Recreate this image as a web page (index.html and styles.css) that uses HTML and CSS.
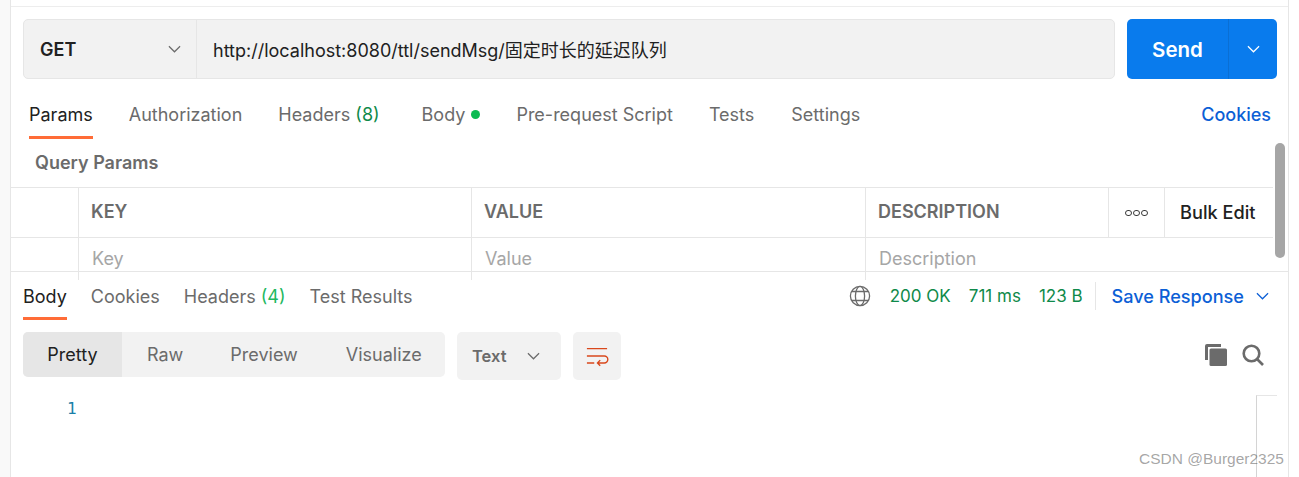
FILE: index.html
```html
<!DOCTYPE html>
<html lang="en">
<head>
  <meta charset="UTF-8">
  <meta name="viewport" content="width=device-width, initial-scale=1.0">
  <title>Postman request</title>
  <link rel="stylesheet" href="styles.css">
</head>
<body>
  <div class="app">
    <div class="rail"></div>
    <div class="main">
      <div class="topline"></div>

      <!-- Request bar -->
      <div class="request">
        <div class="urlbar">
          <div class="method">
            <span>GET</span>
            <svg class="chev" viewBox="0 0 14 8"><path d="M1 1l6 6 6-6"/></svg>
          </div>
          <div class="url">http://localhost:8080/ttl/sendMsg/固定时长的延迟队列</div>
        </div>
        <div class="send">
          <span class="send-label">Send</span>
          <span class="send-more">
            <svg class="chev chev-white" viewBox="0 0 14 8"><path d="M1 1l6 6 6-6"/></svg>
          </span>
        </div>
      </div>

      <!-- Request tabs -->
      <div class="tabs req-tabs">
        <span class="tab active">Params</span>
        <span class="tab">Authorization</span>
        <span class="tab">Headers <em class="count">(8)</em></span>
        <span class="tab tab-body">Body <i class="dot"></i></span>
        <span class="tab">Pre-request Script</span>
        <span class="tab">Tests</span>
        <span class="tab tab-settings">Settings</span>
        <span class="cookies">Cookies</span>
      </div>

      <!-- Query params -->
      <div class="params">
        <div class="params-title">Query Params</div>
        <div class="row row-head">
          <div class="cell"></div>
          <div class="cell">KEY</div>
          <div class="cell">VALUE</div>
          <div class="cell">DESCRIPTION</div>
          <div class="cell cell-dots"><i></i><i></i><i></i></div>
          <div class="cell cell-bulk">Bulk Edit</div>
        </div>
        <div class="row row-empty">
          <div class="cell"></div>
          <div class="cell">Key</div>
          <div class="cell">Value</div>
          <div class="cell">Description</div>
        </div>
        <div class="scrollbar"></div>
      </div>

      <!-- Response -->
      <div class="res-head">
        <div class="tabs res-tabs">
          <span class="tab active">Body</span>
          <span class="tab">Cookies</span>
          <span class="tab">Headers <em class="count count-light">(4)</em></span>
          <span class="tab">Test Results</span>
        </div>
        <div class="res-meta">
          <svg class="globe" viewBox="0 0 22 22">
            <circle cx="11" cy="11" r="9.6"/>
            <ellipse cx="11" cy="11" rx="4.6" ry="9.6"/>
            <path d="M3 6.5h16M3 15.5h16"/>
          </svg>
          <span class="stat stat-ok">200 OK</span>
          <span class="stat stat-time">711 ms</span>
          <span class="stat stat-size">123 B</span>
          <span class="save">Save Response</span>
          <svg class="chev chev-blue" viewBox="0 0 14 8"><path d="M1 1l6 6 6-6"/></svg>
        </div>
      </div>

      <div class="toolbar">
        <div class="segment">
          <span class="seg seg-on">Pretty</span>
          <span class="seg seg-raw">Raw</span>
          <span class="seg seg-preview">Preview</span>
          <span class="seg seg-vis">Visualize</span>
        </div>
        <div class="format">
          <span>Text</span>
          <svg class="chev" viewBox="0 0 14 8"><path d="M1 1l6 6 6-6"/></svg>
        </div>
        <div class="wrap-btn">
          <svg viewBox="0 0 24 20"><path d="M1 2h22M1 10h19a3.6 3.6 0 0 1 0 7.6h-7M15.500 14.500l-3 3.100 3 3M1 17.600h8"/></svg>
        </div>
        <div class="tools">
          <svg class="copy" viewBox="0 0 22 22">
            <path d="M0 16V2a2 2 0 0 1 2-2h14v3H3v13z"/>
            <rect x="4.500" y="4.500" width="17.500" height="17.500" rx="1.500"/>
          </svg>
          <svg class="search" viewBox="0 0 22 22"><circle cx="9.500" cy="9.500" r="7.800"/><path d="M15 15l6 6"/></svg>
        </div>
      </div>

      <div class="editor">
        <span class="lineno">1</span>
        <div class="minimap"></div>
      </div>
    </div>
  </div>
  <div class="watermark">CSDN @Burger2325</div>
</body>
</html>
```

FILE: styles.css
```css
/* Postman style request pane */
* {
  box-sizing: border-box;
}

html, body {
  margin: 0;
  height: 477px;
  overflow: hidden;
  background-color: #ffffff;
}

body {
  font-family: 'Inter', 'Noto Sans CJK SC', sans-serif;
  color: #6b6b6b;
  position: relative;
}

.app {
  display: flex;
  width: 1289px;
  height: 477px;
  border-right: 1px solid #e6e6e6;
}

.rail {
  width: 11px;
  flex: none;
  background-color: #f9f9f9;
  border-right: 1px solid #e6e6e6;
}

.main {
  flex: 1;
  min-width: 0;
}

.topline {
  height: 7px;
  border-bottom: 1px solid #ededed;
}

.chev {
  width: 13px;
  height: 8px;
  fill: none;
  stroke: #6b6b6b;
  stroke-width: 1.3;
}

.chev-white {
  stroke: #ffffff;
}

.chev-blue {
  stroke: #0c5fd6;
}

/* Request bar */
.request {
  display: flex;
  gap: 12px;
  margin: 12px 11px 0 12px;
  height: 60px;
}

.urlbar {
  flex: 1;
  display: flex;
  background-color: #f2f2f2;
  border: 1px solid #e6e6e6;
  border-radius: 5px;
}

.method {
  width: 173px;
  display: flex;
  align-items: center;
  justify-content: space-between;
  padding: 0 15px 0 16px;
  border-right: 1px solid #e6e6e6;
  color: #212121;
  font-size: 18px;
  font-weight: 600;
}

.url {
  display: flex;
  align-items: center;
  padding-left: 16px;
  color: #212121;
  font-size: 18px;
}

.send {
  width: 150px;
  display: flex;
  background-color: #097bed;
  border-radius: 5px;
  color: #ffffff;
}

.send-label {
  width: 102px;
  display: flex;
  align-items: center;
  justify-content: center;
  border-right: 1px solid #0a6fd4;
  font-size: 20.500px;
  font-weight: 600;
}

.send-more {
  flex: 1;
  display: flex;
  align-items: center;
  justify-content: center;
}

/* Tabs */
.tabs {
  display: flex;
  font-size: 18px;
}

.tab {
  display: block;
  color: #6b6b6b;
  white-space: nowrap;
}

.tab.active {
  color: #212121;
  border-bottom: 3px solid #ff6c37;
}

.count {
  font-style: normal;
  color: #0f8a4a;
}

.count-light {
  color: #1fb85f;
}

.req-tabs {
  margin: 0 17px 0 18px;
  height: 60px;
  padding-top: 25px;
  gap: 36px;
  align-items: flex-start;
}

.req-tabs .tab {
  height: 35px;
}

.tab-body {
  margin-left: 6px;
  display: flex;
  gap: 6px;
}

.tab-settings {
  margin-left: 1px;
}

.dot {
  width: 9px;
  height: 9px;
  margin-top: 6px;
  border-radius: 50%;
  background-color: #0cbb52;
}

.cookies {
  margin-left: auto;
  color: #0c5fd6;
  font-weight: 500;
}

/* Params table */
.params {
  position: relative;
  height: 133px;
  border-bottom: 1px solid #e6e6e6;
}

.params-title {
  height: 48px;
  padding: 13px 0 0 24px;
  font-size: 18px;
  font-weight: 600;
}

.row {
  display: grid;
  grid-template-columns: 68px 393px 394px 243px 56px 108px;
  width: 1262px;
  border-top: 1px solid #e6e6e6;
}

.cell {
  border-right: 1px solid #e6e6e6;
  padding-left: 12px;
}

.cell:last-child {
  border-right: none;
}

.row-head {
  height: 50px;
  align-items: stretch;
  line-height: 48px;
  font-size: 18px;
  font-weight: 600;
}

.row-empty {
  height: 34px;
  line-height: 42px;
  font-size: 18px;
  color: #a6a6a6;
}

.row-empty .cell {
  padding-left: 13px;
}

.cell-dots {
  display: flex;
  align-items: center;
  justify-content: center;
  gap: 1.500px;
  padding: 0;
  height: 50px;
}

.cell-dots i {
  width: 6.500px;
  height: 6.500px;
  border: 1.400px solid #3a3a3a;
  border-radius: 50%;
}

.cell-bulk {
  padding-left: 15px;
  color: #212121;
  font-weight: 500;
  font-size: 18.200px;
}

.scrollbar {
  position: absolute;
  top: 4px;
  right: 3px;
  width: 10px;
  height: 115px;
  border-radius: 5px;
  background-color: #a6a6a6;
}

/* Response */
.res-head {
  display: flex;
  justify-content: space-between;
  height: 60px;
  padding: 0 19px 0 12px;
}

.res-tabs {
  gap: 24px;
  padding-top: 14px;
  align-items: flex-start;
}

.res-tabs .tab {
  height: 34px;
}

.res-meta {
  display: flex;
  align-items: center;
  height: 48px;
  font-size: 17px;
}

.globe {
  width: 22px;
  height: 22px;
  margin-right: 19px;
  fill: none;
  stroke: #6b6b6b;
  stroke-width: 1.300;
}

.stat {
  color: #0f8a4a;
}

.stat-time {
  margin-left: 18px;
}

.stat-size {
  margin-left: 18px;
  padding-right: 12px;
  border-right: 1px solid #e6e6e6;
  height: 28px;
  line-height: 28px;
}

.save {
  margin-left: 16px;
  margin-right: 12px;
  color: #0c5fd6;
  font-size: 18.100px;
  font-weight: 500;
}

.toolbar {
  display: flex;
  align-items: flex-start;
  height: 63px;
  padding-left: 12px;
  font-size: 18px;
}

.segment {
  width: 422px;
  height: 45px;
  display: flex;
  align-items: center;
  background-color: #f2f2f2;
  border-radius: 5px;
  overflow: hidden;
}

.seg {
  line-height: 45px;
}

.seg-on {
  width: 99px;
  text-align: center;
  background-color: #e6e6e6;
  color: #212121;
}

.seg-raw {
  margin-left: 25px;
}

.seg-preview {
  margin-left: 47px;
}

.seg-vis {
  margin-left: 48px;
}

.format {
  width: 104px;
  height: 48px;
  margin-left: 12px;
  padding: 0 21px 0 15px;
  display: flex;
  align-items: center;
  justify-content: space-between;
  background-color: #f2f2f2;
  border-radius: 5px;
  font-size: 16.500px;
  font-weight: 600;
}

.wrap-btn {
  width: 48px;
  height: 48px;
  margin-left: 12px;
  display: flex;
  align-items: center;
  justify-content: center;
  background-color: #f2f2f2;
  border-radius: 5px;
}

.wrap-btn svg {
  width: 22px;
  height: 20px;
  fill: none;
  stroke: #d9481c;
  stroke-width: 1.500;
  overflow: visible;
}

.tools {
  margin-left: auto;
  margin-right: 24px;
  height: 45px;
  display: flex;
  align-items: center;
  gap: 15px;
}

.copy {
  width: 22px;
  height: 22px;
  fill: #6b6b6b;
}

.search {
  width: 22px;
  height: 22px;
  fill: none;
  stroke: #6b6b6b;
  stroke-width: 2.600;
}

/* Editor */
.editor {
  position: relative;
  height: 82px;
}

.lineno {
  position: absolute;
  top: 4px;
  left: 56px;
  font-family: 'DejaVu Sans Mono', monospace;
  font-size: 16px;
  color: #1a7fa8;
}

.minimap {
  position: absolute;
  top: 0;
  left: 1245px;
  width: 21px;
  height: 82px;
  border-top: 1px solid #e6e6e6;
  border-left: 1px solid #d4d4d4;
}

.watermark {
  position: absolute;
  top: 450px;
  left: 1139px;
  font-family: 'Liberation Sans', sans-serif;
  font-size: 15.500px;
  color: rgba(90, 90, 90, 0.55);
  white-space: nowrap;
}
```
